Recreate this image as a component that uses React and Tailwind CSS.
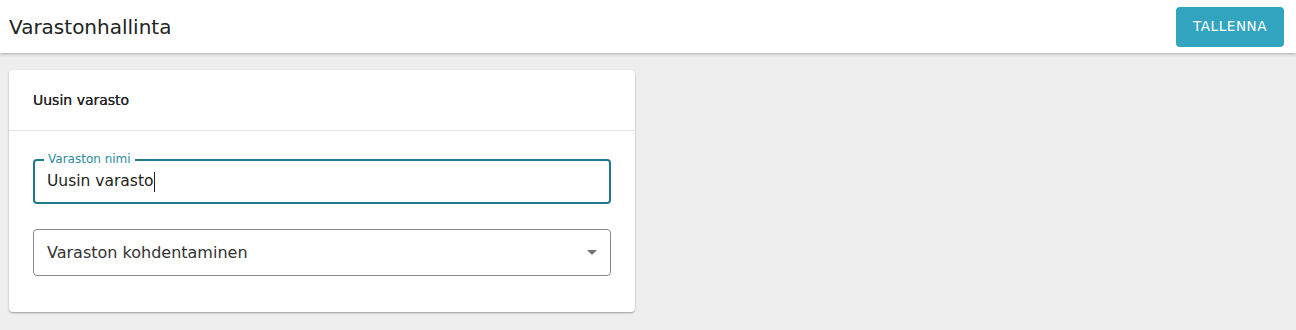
export default function App() {
  return (
    <div
      className="min-h-[330px] bg-[#eeeeee]"
      style={{ fontFamily: '"DejaVu Sans", "Noto Sans", sans-serif' }}
    >
      <header className="flex h-[53px] items-center justify-between bg-white pl-[9px] pr-[12px] shadow-[0_1px_3px_rgba(0,0,0,0.3)]">
        <h1 className="text-[20px] text-[#222]">Varastonhallinta</h1>
        <button className="h-[40px] w-[108px] rounded-[4px] bg-[#33a4bf] text-[13.5px] tracking-[0.6px] text-white">
          TALLENNA
        </button>
      </header>

      <div className="px-[9px] pt-[17px]">
        <div className="w-[626px] rounded-[4px] bg-white shadow-[0_1px_2px_rgba(0,0,0,0.35)]">
          <div className="flex h-[61px] items-center border-b border-[#e3e3e3] px-[24px]">
            <h2 className="text-[14px] text-[#222] [text-shadow:0_0_0.3px_#222]">Uusin varasto</h2>
          </div>
          <div className="flex flex-col gap-[25px] px-[24px] pb-[36px] pt-[28px]">
            <div className="relative h-[45px] rounded-[4px] border-2 border-[#217a8a]">
              <span className="absolute left-[9px] top-[-9px] bg-white px-[4px] text-[12px] leading-[14px] text-[#2a8c9c]">
                Varaston nimi
              </span>
              <div className="flex h-full items-center pl-[12px] text-[15.5px] text-[#222]">
                Uusin varasto
                <span className="ml-[1px] inline-block h-[20px] w-[1px] bg-[#222]" />
              </div>
            </div>
            <div className="flex h-[47px] items-center justify-between rounded-[4px] border border-[#888] pl-[13px] pr-[13px]">
              <span className="text-[16px] text-[#333]">Varaston kohdentaminen</span>
              <svg width="10" height="5" viewBox="0 0 10 5">
                <path d="M0 0 L10 0 L5 5 Z" fill="#757575" />
              </svg>
            </div>
          </div>
        </div>
      </div>
    </div>
  );
}
